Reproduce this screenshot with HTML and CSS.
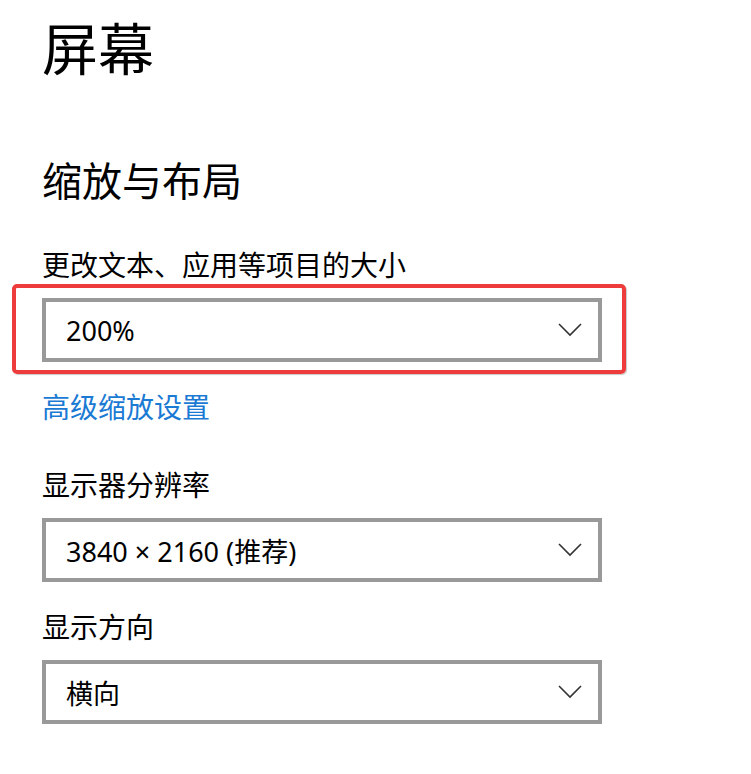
FILE: index.html
```html
<!DOCTYPE html>
<html lang="zh-CN">
<head>
<meta charset="utf-8">
<title>屏幕</title>
<link rel="stylesheet" href="styles.css">
</head>
<body>
<main class="page">
  <h1 class="page-title">屏幕</h1>
  <h2 class="section-title">缩放与布局</h2>

  <div class="field">
    <div class="field-label">更改文本、应用等项目的大小</div>
    <div class="combo-wrap">
      <div class="combo">
        <span class="combo-value">200%</span>
        <svg class="chevron" width="24" height="14" viewBox="0 0 24 14"><path d="M1 1 L12 12 L23 1" fill="none" stroke="#333" stroke-width="1.6"/></svg>
      </div>
      <div class="highlight"></div>
    </div>
  </div>

  <a class="link" href="#">高级缩放设置</a>

  <div class="field field-res">
    <div class="field-label">显示器分辨率</div>
    <div class="combo">
      <span class="combo-value">3840 × 2160 (推荐)</span>
      <svg class="chevron" width="24" height="14" viewBox="0 0 24 14"><path d="M1 1 L12 12 L23 1" fill="none" stroke="#333" stroke-width="1.6"/></svg>
    </div>
  </div>

  <div class="field field-orient">
    <div class="field-label">显示方向</div>
    <div class="combo">
      <span class="combo-value">横向</span>
      <svg class="chevron" width="24" height="14" viewBox="0 0 24 14"><path d="M1 1 L12 12 L23 1" fill="none" stroke="#333" stroke-width="1.6"/></svg>
    </div>
  </div>
</main>
</body>
</html>
```

FILE: styles.css
```css
html, body {
  margin: 0;
  padding: 0;
  background: #ffffff;
}

body {
  font-family: "Segoe UI", "Noto Sans", "Noto Sans CJK SC", sans-serif;
  color: #000000;
}

.page {
  padding: 18px 0 0 42px;
  width: 560px;
}

.page-title {
  margin: 0;
  font-size: 56px;
  line-height: 56px;
  font-weight: 400;
  font-family: "Noto Sans CJK SC", sans-serif;
}

.section-title {
  margin: 85px 0 0 0;
  font-size: 40px;
  line-height: 40px;
  font-weight: 400;
  font-family: "Noto Sans CJK SC", sans-serif;
}

.field {
  display: flex;
  flex-direction: column;
}

.field-label {
  margin-top: 51px;
  font-size: 28px;
  line-height: 28px;
  font-family: "Noto Sans CJK SC", sans-serif;
  margin-bottom: 20px;
}

.field-res .field-label {
  margin-top: 50px;
}

.field-orient .field-label {
  margin-top: 30px;
}

.combo-wrap {
  position: relative;
}

.combo {
  box-sizing: border-box;
  height: 64px;
  border: 4px solid #999999;
  background: #ffffff;
  display: flex;
  align-items: center;
  justify-content: space-between;
  padding: 0 16px 0 20px;
}

.combo-value {
  font-size: 27px;
  font-family: "Segoe UI", "Noto Sans", "Noto Sans CJK SC", sans-serif;
  color: #000;
}

.chevron {
  display: block;
}

.highlight {
  position: absolute;
  top: -14px;
  left: -30px;
  right: -24px;
  bottom: -12px;
  border: 4px solid #ee3b3b;
  border-radius: 5px;
  box-shadow: 1px 1px 1px rgba(0,0,0,0.22);
  pointer-events: none;
}

.link {
  display: block;
  margin-top: 30px;
  font-size: 28px;
  line-height: 28px;
  color: #1a7ad4;
  text-decoration: none;
  font-family: "Noto Sans CJK SC", sans-serif;
}
```
